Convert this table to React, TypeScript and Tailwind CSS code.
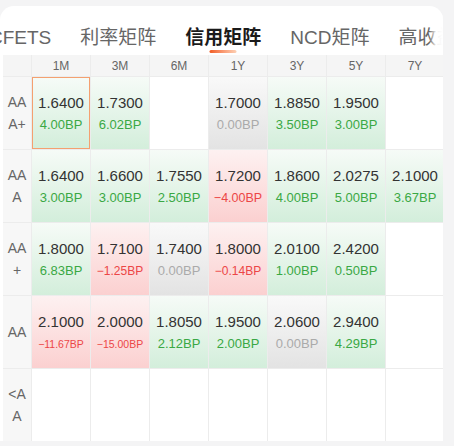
import React from "react";

type Tone = "g" | "r" | "n" | "e";
type Cell = { v?: string; bp?: string; t: Tone; fs?: number };

const cols = ["1M", "3M", "6M", "1Y", "3Y", "5Y", "7Y"];

const E: Cell = { t: "e" };

const rows: { label: string[]; cells: Cell[] }[] = [
  {
    label: ["AA", "A+"],
    cells: [
      { v: "1.6400", bp: "4.00BP", t: "g" },
      { v: "1.7300", bp: "6.02BP", t: "g" },
      E,
      { v: "1.7000", bp: "0.00BP", t: "n" },
      { v: "1.8850", bp: "3.50BP", t: "g" },
      { v: "1.9500", bp: "3.00BP", t: "g" },
      E,
    ],
  },
  {
    label: ["AA", "A"],
    cells: [
      { v: "1.6400", bp: "3.00BP", t: "g" },
      { v: "1.6600", bp: "3.00BP", t: "g" },
      { v: "1.7550", bp: "2.50BP", t: "g" },
      { v: "1.7200", bp: "\u22124.00BP", t: "r", fs: 12.5 },
      { v: "1.8600", bp: "4.00BP", t: "g" },
      { v: "2.0275", bp: "5.00BP", t: "g" },
      { v: "2.1000", bp: "3.67BP", t: "g" },
    ],
  },
  {
    label: ["AA", "+"],
    cells: [
      { v: "1.8000", bp: "6.83BP", t: "g" },
      { v: "1.7100", bp: "\u22121.25BP", t: "r", fs: 12 },
      { v: "1.7400", bp: "0.00BP", t: "n" },
      { v: "1.8000", bp: "\u22120.14BP", t: "r", fs: 12 },
      { v: "2.0100", bp: "1.00BP", t: "g" },
      { v: "2.4200", bp: "0.50BP", t: "g" },
      E,
    ],
  },
  {
    label: ["AA"],
    cells: [
      { v: "2.1000", bp: "\u221211.67BP", t: "r", fs: 10.5 },
      { v: "2.0000", bp: "\u221215.00BP", t: "r", fs: 10.5 },
      { v: "1.8050", bp: "2.12BP", t: "g" },
      { v: "1.9500", bp: "2.00BP", t: "g" },
      { v: "2.0600", bp: "0.00BP", t: "n" },
      { v: "2.9400", bp: "4.29BP", t: "g" },
      E,
    ],
  },
  {
    label: ["<A", "A"],
    cells: [E, E, E, E, E, E, E],
  },
];

const bgClass: Record<Tone, string> = {
  g: "bg-linear-to-b from-[#f6fbf7] to-[#d3eedb]",
  r: "bg-linear-to-b from-[#fdf1f1] to-[#fbd0d0]",
  n: "bg-linear-to-b from-[#f9f9f9] to-[#e3e3e3]",
  e: "bg-white",
};

const bpColor: Record<Tone, string> = {
  g: "text-[#3aa844]",
  r: "text-[#ec4646]",
  n: "text-[#aaaaaa]",
  e: "",
};

const tabs = ["CFETS", "利率矩阵", "信用矩阵", "NCD矩阵", "高收益"];

export default function App() {
  return (
    <div
      className="w-[454px] h-[446px] overflow-hidden bg-[#f4f4f5] pt-[6px]"
      style={{ fontFamily: '"Liberation Sans", "Noto Sans CJK SC", sans-serif' }}
    >
      <div className="w-[443px] bg-white rounded-t-[14px] overflow-hidden">
        <div className="relative h-[49px] pt-[19px] overflow-hidden">
          <div className="flex gap-[29px] ml-[-11px] whitespace-nowrap">
            {tabs.map((t, i) => (
              <div
                key={t}
                className={
                  "relative text-[19px] leading-[26px] " +
                  (i === 2 ? "font-bold text-[#1a1a1a]" : "text-[#666666]")
                }
              >
                {t}
                {i === 2 && (
                  <div className="absolute top-[25px] left-1/2 -translate-x-1/2 w-[27px] h-[3px] rounded-full bg-linear-to-r from-[#f05a1e] to-[#fcd0b4]" />
                )}
              </div>
            ))}
          </div>
          <div className="absolute right-0 top-0 h-full w-[14px] bg-linear-to-r from-white/0 via-white/90 to-white" />
        </div>
        <div className="pl-[3px]">
          <div className="grid grid-cols-[28px_repeat(7,58px)] grid-rows-[21px_repeat(5,72px)] gap-px bg-[#ececec]">
            <div className="bg-[#f5f5f5]" />
            {cols.map((c) => (
              <div
                key={c}
                className="bg-[#f5f5f5] flex items-center justify-center text-[12px] text-[#666666]"
              >
                {c}
              </div>
            ))}
            {rows.map((r, ri) => (
              <React.Fragment key={ri}>
                <div className="bg-[#f7f7f7] flex flex-col items-center justify-center text-[14px] leading-[22px] text-[#666666]">
                  {r.label.map((l) => (
                    <div key={l}>{l}</div>
                  ))}
                </div>
                {r.cells.map((c, ci) => (
                  <div
                    key={ci}
                    className={
                      "flex flex-col items-center justify-center " +
                      bgClass[c.t] +
                      (ri === 0 && ci === 0 ? " border border-[#f4a070]" : "")
                    }
                  >
                    {c.v && (
                      <>
                        <div className="text-[15px] leading-[20px] text-[#333333]">{c.v}</div>
                        <div
                          className={"mt-[3px] leading-[18px] whitespace-nowrap " + bpColor[c.t]}
                          style={{ fontSize: (c.fs ?? 13) + "px" }}
                        >
                          {c.bp}
                        </div>
                      </>
                    )}
                  </div>
                ))}
              </React.Fragment>
            ))}
          </div>
        </div>
      </div>
    </div>
  );
}
